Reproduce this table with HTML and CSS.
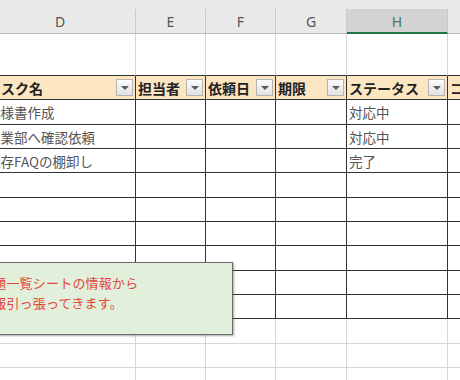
FILE: index.html
```html
<!DOCTYPE html>
<html lang="ja">
<head>
<meta charset="utf-8">
<link rel="stylesheet" href="styles.css">
</head>
<body>
<div class="viewport">
  <div class="sheet">
    <div class="colheads">
      <div class="ch cd">D</div>
      <div class="ch ce">E</div>
      <div class="ch cf">F</div>
      <div class="ch cg">G</div>
      <div class="ch chh sel">H</div>
      <div class="ch ci">I</div>
    </div>
    <div class="grid">
      <div class="c r1"></div><div class="c r1"></div><div class="c r1"></div><div class="c r1"></div><div class="c r1"></div><div class="c r1"></div>

      <div class="c t th"><span>タスク名</span><i class="dd"></i></div>
      <div class="c t th"><span>担当者</span><i class="dd"></i></div>
      <div class="c t th"><span>依頼日</span><i class="dd"></i></div>
      <div class="c t th"><span>期限</span><i class="dd"></i></div>
      <div class="c t th"><span>ステータス</span><i class="dd"></i></div>
      <div class="c t th"><span>コメント</span><i class="dd"></i></div>

      <div class="c t">仕様書作成</div><div class="c t"></div><div class="c t"></div><div class="c t"></div><div class="c t">対応中</div><div class="c t"></div>
      <div class="c t">営業部へ確認依頼</div><div class="c t"></div><div class="c t"></div><div class="c t"></div><div class="c t">対応中</div><div class="c t"></div>
      <div class="c t">既存FAQの棚卸し</div><div class="c t"></div><div class="c t"></div><div class="c t"></div><div class="c t">完了</div><div class="c t"></div>
      <div class="c t"></div><div class="c t"></div><div class="c t"></div><div class="c t"></div><div class="c t"></div><div class="c t"></div>
      <div class="c t"></div><div class="c t"></div><div class="c t"></div><div class="c t"></div><div class="c t"></div><div class="c t"></div>
      <div class="c t"></div><div class="c t"></div><div class="c t"></div><div class="c t"></div><div class="c t"></div><div class="c t"></div>
      <div class="c t"></div><div class="c t"></div><div class="c t"></div><div class="c t"></div><div class="c t"></div><div class="c t"></div>
      <div class="c t"></div><div class="c t"></div><div class="c t"></div><div class="c t"></div><div class="c t"></div><div class="c t"></div>
      <div class="c t"></div><div class="c t"></div><div class="c t"></div><div class="c t"></div><div class="c t"></div><div class="c t"></div>

      <div class="c"></div><div class="c"></div><div class="c"></div><div class="c"></div><div class="c"></div><div class="c"></div>
      <div class="c"></div><div class="c"></div><div class="c"></div><div class="c"></div><div class="c"></div><div class="c"></div>
      <div class="c"></div><div class="c"></div><div class="c"></div><div class="c"></div><div class="c"></div><div class="c"></div>
    </div>
    <div class="note">
      <p>課題一覧シートの情報から</p>
      <p>情報引っ張ってきます。</p>
    </div>
  </div>
</div>
</body>
</html>
```

FILE: styles.css
```css
html, body {
  margin: 0;
  padding: 0;
  background: #ffffff;
}
.viewport {
  width: 460px;
  height: 380px;
  overflow: hidden;
  position: relative;
}
.sheet {
  position: relative;
  margin-left: -15px;
  width: 600px;
  font-family: "Noto Sans CJK JP", "Noto Sans", sans-serif;
}
.colheads {
  display: flex;
  height: 34px;
  padding-top: 9px;
  box-sizing: border-box;
  background: #e9e9e9;
  border-bottom: 1px solid #bcbcbc;
}
.ch {
  box-sizing: border-box;
  height: 24px;
  border-right: 1px solid #c9c9c9;
  display: flex;
  align-items: center;
  justify-content: center;
  font-family: "Noto Sans", "Liberation Sans", sans-serif;
  font-size: 14px;
  color: #555555;
}
.cd { width: 151px; }
.ce { width: 70px; }
.cf { width: 70px; }
.cg { width: 71px; }
.chh { width: 101px; }
.ci { width: 120px; }
.ch.sel {
  background: #d3d3d3;
  color: #4a7a58;
  height: 25px;
  border-bottom: 2px solid #217346;
  margin-bottom: -1px;
  padding-top: 1px;
}
.grid {
  display: grid;
  grid-template-columns: 151px 70px 70px 71px 101px 120px;
  grid-template-rows: 42px 24px 25px 24px 24px 25px 24px 24px 25px 24px 24px 25px 24px 24px;
}
.c {
  box-sizing: border-box;
  border-right: 1px solid #d6d6d6;
  border-bottom: 1px solid #d6d6d6;
  padding-left: 2px;
  font-size: 13.5px;
  color: #555555;
  display: flex;
  align-items: center;
  white-space: nowrap;
  overflow: hidden;
}
.r1 {
  border-bottom-color: #333333;
}
.t {
  border-right-color: #333333;
  border-bottom-color: #333333;
}
.th {
  background: #fce6c2;
  font-weight: bold;
  font-size: 14px;
  color: #222222;
  justify-content: space-between;
  padding-right: 2px;
}
.dd {
  flex: none;
  width: 17px;
  height: 17px;
  box-sizing: border-box;
  border: 1px solid #b4b4b4;
  background: linear-gradient(#fbfbfb, #e2e2e2);
  display: flex;
  align-items: center;
  justify-content: center;
}
.dd::after {
  content: "";
  width: 0;
  height: 0;
  border-left: 4px solid transparent;
  border-right: 4px solid transparent;
  border-top: 4px solid #5a5a5a;
}
.note {
  position: absolute;
  left: -15px;
  top: 262px;
  width: 263px;
  height: 73px;
  box-sizing: border-box;
  background: #e2efda;
  border: 1px solid #6a6a6a;
  box-shadow: 1px 1px 2px rgba(0, 0, 0, 0.35);
  padding: 10px 0 0 9px;
  color: #e4473d;
  font-size: 13px;
  letter-spacing: 0.2px;
  line-height: 20px;
}
.note p {
  margin: 0;
  white-space: nowrap;
}
```
